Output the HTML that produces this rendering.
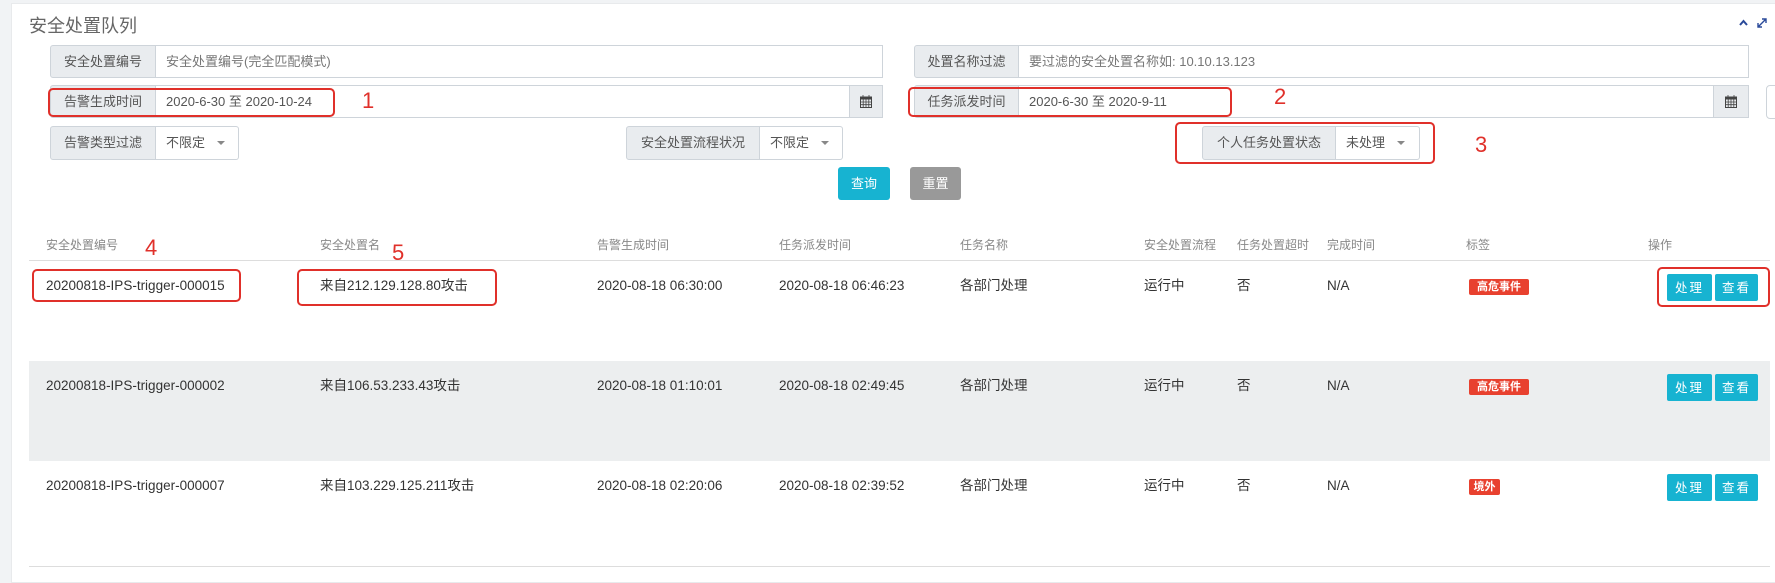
<!DOCTYPE html>
<html><head><meta charset="utf-8"><style>
*{box-sizing:border-box;margin:0;padding:0}
body{width:1775px;height:570px;background:#f1f3f5;font-family:"Liberation Sans","Noto Sans CJK SC",sans-serif;position:relative;overflow:hidden;color:#333;line-height:18px}
.panel{position:absolute;left:11px;top:3px;width:1775px;height:580px;background:#fff;border:1px solid #e8eaec}
.a{position:absolute}
.lbl{position:absolute;background:#e9ecef;border:1px solid #ced4da;color:#555;font-size:13px;display:flex;align-items:center;justify-content:center;border-radius:3px 0 0 3px}
.inp{position:absolute;border:1px solid #ced4da;border-left:none;font-size:13px;color:#555;display:flex;align-items:center;padding-left:10px;background:#fff}
.cal{position:absolute;background:#e9ecef;border:1px solid #ced4da;display:flex;align-items:center;justify-content:center}
.car{display:inline-block;border-left:4px solid transparent;border-right:4px solid transparent;border-top:4px solid #888;margin-left:12px}
.btn{position:absolute;color:#fff;font-size:13px;display:flex;align-items:center;justify-content:center;border-radius:3px}
.th{position:absolute;top:236px;font-size:12px;color:#888}
.td{position:absolute;font-size:13.5px;color:#333;height:18px;line-height:18px;white-space:nowrap}
.tag{position:absolute;background:#e8412f;color:#fff;font-size:11px;font-weight:bold;border-radius:2px;height:16px;display:flex;align-items:center;justify-content:center}
.ab{position:absolute;background:#17b3d1;color:#fff;font-size:12.5px;letter-spacing:2px;display:flex;align-items:center;justify-content:center;border-radius:2px;height:27px}
.rb{position:absolute;border:2.5px solid #e0302a;border-radius:5px}
.rn{position:absolute;color:#e0302a;font-size:22px;line-height:26px}
</style></head><body>
<div class="panel"></div>
<div class="a" style="left:29px;top:14px;font-size:18px;color:#666;line-height:24px">安全处置队列</div>
<svg class="a" style="left:1738px;top:17px" width="34" height="12" viewBox="0 0 34 12"><path d="M2 8 L5.5 4 L9 8" fill="none" stroke="#2a4a9a" stroke-width="2"/><path d="M20 10 L28 2 M24 2 H28 V6 M20 6 V10 H24" fill="none" stroke="#2a4a9a" stroke-width="1.4"/></svg>

<div class="lbl" style="left:50px;top:45px;width:106px;height:33px">安全处置编号</div>
<div class="inp" style="left:156px;top:45px;width:727px;height:33px;color:#777">安全处置编号(完全匹配模式)</div>
<div class="lbl" style="left:914px;top:45px;width:105px;height:33px">处置名称过滤</div>
<div class="inp" style="left:1019px;top:45px;width:730px;height:33px;color:#777">要过滤的安全处置名称如: 10.10.13.123</div>

<div class="lbl" style="left:50px;top:85px;width:106px;height:33px">告警生成时间</div>
<div class="inp" style="left:156px;top:85px;width:694px;height:33px">2020-6-30 至 2020-10-24</div>
<div class="cal" style="left:849px;top:85px;width:34px;height:33px"><svg width="12" height="13" viewBox="0 0 12 13"><rect x="0.5" y="2" width="11" height="10.5" fill="none" stroke="#444"/><rect x="0.5" y="2" width="11" height="2.5" fill="#444"/><path d="M3 0v3M9 0v3M0.5 7h11M0.5 9.7h11M3.2 4.5v8M6 4.5v8M8.8 4.5v8" stroke="#444" stroke-width="0.8"/></svg></div>
<div class="lbl" style="left:914px;top:85px;width:105px;height:33px">任务派发时间</div>
<div class="inp" style="left:1019px;top:85px;width:695px;height:33px">2020-6-30 至 2020-9-11</div>
<div class="cal" style="left:1713px;top:85px;width:36px;height:33px"><svg width="12" height="13" viewBox="0 0 12 13"><rect x="0.5" y="2" width="11" height="10.5" fill="none" stroke="#444"/><rect x="0.5" y="2" width="11" height="2.5" fill="#444"/><path d="M3 0v3M9 0v3M0.5 7h11M0.5 9.7h11M3.2 4.5v8M6 4.5v8M8.8 4.5v8" stroke="#444" stroke-width="0.8"/></svg></div>
<div class="a" style="left:1766px;top:85px;width:20px;height:34px;border:1px solid #ced4da;border-radius:4px"></div>

<div class="lbl" style="left:50px;top:126px;width:106px;height:34px">告警类型过滤</div>
<div class="inp" style="left:156px;top:126px;width:83px;height:34px;border-radius:0 3px 3px 0">不限定<span class="car"></span></div>
<div class="lbl" style="left:626px;top:126px;width:134px;height:34px">安全处置流程状况</div>
<div class="inp" style="left:760px;top:126px;width:83px;height:34px;border-radius:0 3px 3px 0">不限定<span class="car"></span></div>
<div class="lbl" style="left:1202px;top:126px;width:134px;height:34px">个人任务处置状态</div>
<div class="inp" style="left:1336px;top:126px;width:84px;height:34px;border-radius:0 3px 3px 0">未处理<span class="car"></span></div>

<div class="btn" style="left:838px;top:167px;width:52px;height:33px;background:#17b3d1">查询</div>
<div class="btn" style="left:910px;top:167px;width:51px;height:33px;background:#999">重置</div>

<div class="th" style="left:46px">安全处置编号</div>
<div class="th" style="left:320px">安全处置名</div>
<div class="th" style="left:597px">告警生成时间</div>
<div class="th" style="left:779px">任务派发时间</div>
<div class="th" style="left:960px">任务名称</div>
<div class="th" style="left:1144px">安全处置流程</div>
<div class="th" style="left:1237px">任务处置超时</div>
<div class="th" style="left:1327px">完成时间</div>
<div class="th" style="left:1466px">标签</div>
<div class="th" style="left:1648px">操作</div>
<div class="a" style="left:29px;top:260px;width:1741px;height:1px;background:#ddd"></div>
<div class="a" style="left:29px;top:361px;width:1741px;height:100px;background:#eceeef"></div>
<div class="a" style="left:29px;top:566px;width:1741px;height:1px;background:#ddd"></div>

<div class="td" style="left:46px;top:277px">20200818-IPS-trigger-000015</div>
<div class="td" style="left:320px;top:277px">来自212.129.128.80攻击</div>
<div class="td" style="left:597px;top:277px">2020-08-18 06:30:00</div>
<div class="td" style="left:779px;top:277px">2020-08-18 06:46:23</div>
<div class="td" style="left:960px;top:277px">各部门处理</div>
<div class="td" style="left:1144px;top:277px">运行中</div>
<div class="td" style="left:1237px;top:277px">否</div>
<div class="td" style="left:1327px;top:277px">N/A</div>
<div class="tag" style="left:1469px;top:279px;width:60px">高危事件</div>
<div class="ab" style="left:1667px;top:274px;width:45px">处理</div>
<div class="ab" style="left:1715px;top:274px;width:43px">查看</div>

<div class="td" style="left:46px;top:377px">20200818-IPS-trigger-000002</div>
<div class="td" style="left:320px;top:377px">来自106.53.233.43攻击</div>
<div class="td" style="left:597px;top:377px">2020-08-18 01:10:01</div>
<div class="td" style="left:779px;top:377px">2020-08-18 02:49:45</div>
<div class="td" style="left:960px;top:377px">各部门处理</div>
<div class="td" style="left:1144px;top:377px">运行中</div>
<div class="td" style="left:1237px;top:377px">否</div>
<div class="td" style="left:1327px;top:377px">N/A</div>
<div class="tag" style="left:1469px;top:379px;width:60px">高危事件</div>
<div class="ab" style="left:1667px;top:374px;width:45px">处理</div>
<div class="ab" style="left:1715px;top:374px;width:43px">查看</div>

<div class="td" style="left:46px;top:477px">20200818-IPS-trigger-000007</div>
<div class="td" style="left:320px;top:477px">来自103.229.125.211攻击</div>
<div class="td" style="left:597px;top:477px">2020-08-18 02:20:06</div>
<div class="td" style="left:779px;top:477px">2020-08-18 02:39:52</div>
<div class="td" style="left:960px;top:477px">各部门处理</div>
<div class="td" style="left:1144px;top:477px">运行中</div>
<div class="td" style="left:1237px;top:477px">否</div>
<div class="td" style="left:1327px;top:477px">N/A</div>
<div class="tag" style="left:1469px;top:479px;width:31px">境外</div>
<div class="ab" style="left:1667px;top:474px;width:45px">处理</div>
<div class="ab" style="left:1715px;top:474px;width:43px">查看</div>

<div class="rb" style="left:48px;top:88px;width:287px;height:29px"></div>
<div class="rn" style="left:362px;top:88px">1</div>
<div class="rb" style="left:908px;top:87px;width:324px;height:30px"></div>
<div class="rn" style="left:1274px;top:84px">2</div>
<div class="rb" style="left:1175px;top:122px;width:260px;height:42px"></div>
<div class="rn" style="left:1475px;top:132px">3</div>
<div class="rb" style="left:32px;top:269px;width:209px;height:33px"></div>
<div class="rn" style="left:145px;top:235px">4</div>
<div class="rb" style="left:297px;top:269px;width:200px;height:37px"></div>
<div class="rn" style="left:392px;top:240px">5</div>
<div class="rb" style="left:1657px;top:267px;width:113px;height:40px"></div>
</body></html>
